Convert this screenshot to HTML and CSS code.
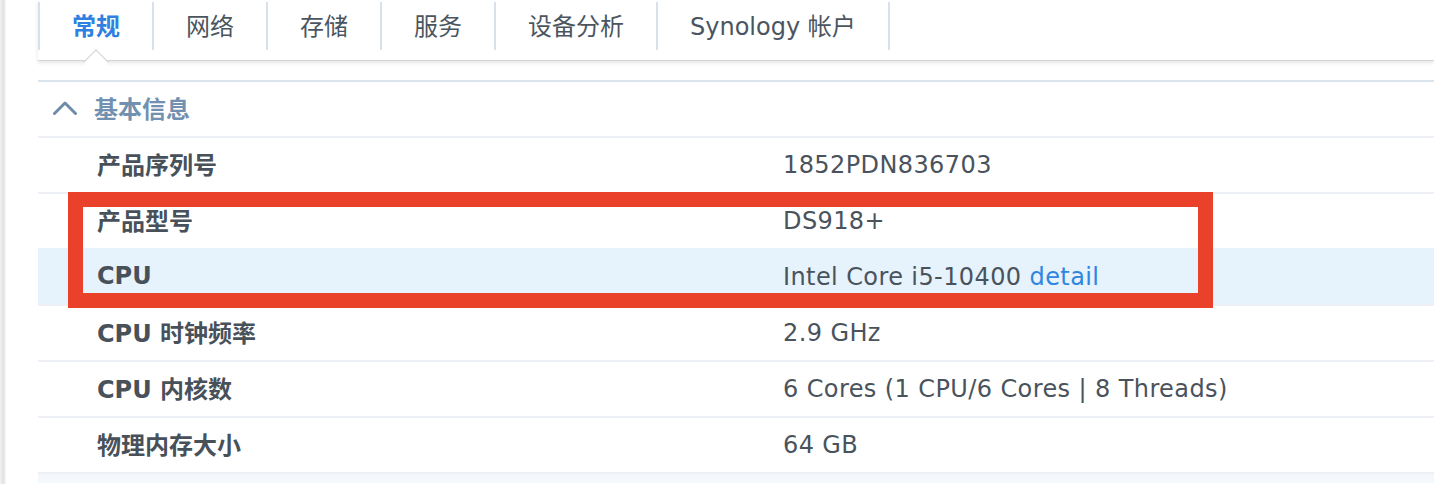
FILE: index.html
```html
<!DOCTYPE html>
<html lang="zh-CN">
<head>
<meta charset="utf-8">
<title>常规 - 基本信息</title>
<link rel="stylesheet" href="styles.css">
</head>
<body>
<div class="window">
  <div class="edge"></div>
  <div class="main">
    <div class="tabbar">
      <div class="tab active">常规</div>
      <div class="tab">网络</div>
      <div class="tab">存储</div>
      <div class="tab">服务</div>
      <div class="tab">设备分析</div>
      <div class="tab">Synology 帐户</div>
    </div>

    <div class="section-head">
      <svg class="chevron" width="24" height="14" viewBox="0 0 24 14" aria-hidden="true">
        <polyline points="1.5,12.5 12,2 22.5,12.5" fill="none" stroke="#6f8dab" stroke-width="3" stroke-linecap="round" stroke-linejoin="round"/>
      </svg>
      <span class="section-title">基本信息</span>
    </div>

    <div class="rows">
      <div class="row"><div class="label">产品序列号</div><div class="value">1852PDN836703</div></div>
      <div class="row"><div class="label">产品型号</div><div class="value">DS918+</div></div>
      <div class="row selected"><div class="label">CPU</div><div class="value">Intel Core i5-10400 <a class="link">detail</a></div></div>
      <div class="row"><div class="label">CPU 时钟频率</div><div class="value">2.9 GHz</div></div>
      <div class="row"><div class="label">CPU 内核数</div><div class="value">6 Cores (1 CPU/6 Cores | 8 Threads)</div></div>
      <div class="row"><div class="label">物理内存大小</div><div class="value">64 GB</div></div>
      <div class="row alt"></div>
    </div>
  </div>
  <div class="highlight-box"></div>
</div>
</body>
</html>
```

FILE: styles.css
```css
html, body {
  margin: 0;
  padding: 0;
  background: #ffffff;
  overflow: hidden;
}

body {
  font-family: "DejaVu Sans", "Noto Sans CJK SC", sans-serif;
  color: #4a535c;
  width: 1434px;
  height: 484px;
}

.window {
  position: relative;
  display: flex;
  height: 484px;
  overflow: hidden;
}

.edge {
  width: 6px;
  flex: none;
  background: linear-gradient(to right, #f2f2f2, #e2e2e2 55%, #ececec 80%, #fafafa);
}

.main {
  flex: 1;
  margin-left: 32px;
  min-width: 0;
}

/* ---------- Tabs ---------- */
.tabbar {
  position: relative;
  z-index: 2;
  display: flex;
  height: 61px;
  box-sizing: border-box;
  padding-top: 2px;
  background: #ffffff;
  border-bottom: 1px solid #d4d4d4;
  box-shadow: 0 2px 4px rgba(0, 0, 0, 0.10);
}

.tab {
  position: relative;
  display: flex;
  align-items: center;
  height: 48px;
  box-sizing: border-box;
  padding: 0 32px 4px;
  border-right: 2px solid #d8e1ea;
  font-size: 24px;
  color: #4b5560;
  white-space: nowrap;
}

.tab:first-child {
  border-left: 2px solid #d8e1ea;
}

.tab.active {
  color: #2f80e0;
  font-weight: bold;
}

.tab.active::after {
  content: "";
  position: absolute;
  left: calc(50% - 9px);
  top: 51px;
  width: 17px;
  height: 17px;
  background: #ffffff;
  border-top: 1px solid #d0d0d0;
  border-left: 1px solid #d0d0d0;
  transform: rotate(45deg);
}

/* ---------- Section header ---------- */
.section-head {
  display: flex;
  align-items: center;
  height: 54px;
  margin-top: 19px;
  border-top: 2px solid #dbe4ed;
  padding-left: 15px;
}

.chevron {
  display: block;
  margin-top: -2px;
}

.section-title {
  margin-left: 17px;
  margin-top: -3px;
  font-size: 24px;
  font-weight: bold;
  color: #7291b0;
}

/* ---------- Rows ---------- */
.row {
  display: grid;
  grid-template-columns: 745px 1fr;
  align-items: center;
  height: 54px;
  border-top: 2px solid #edf1f5;
}

.row.selected {
  background: #e6f2fc;
  border-top-color: #e6f2fc;
}

.row.alt {
  height: 9px;
  background: #f4f8fc;
}

.label {
  padding-left: 59px;
  padding-bottom: 3px;
  font-size: 24px;
  font-weight: bold;
  color: #48515a;
  white-space: nowrap;
}

.value {
  font-size: 24px;
  letter-spacing: 0.4px;
  color: #4a535c;
  white-space: nowrap;
}

.link {
  color: #2f86e0;
  text-decoration: none;
}

/* ---------- Annotation overlay ---------- */
.highlight-box {
  position: absolute;
  left: 68px;
  top: 192px;
  width: 1145px;
  height: 116px;
  box-sizing: border-box;
  border: 15px solid #e9412a;
  z-index: 5;
  pointer-events: none;
}
```
